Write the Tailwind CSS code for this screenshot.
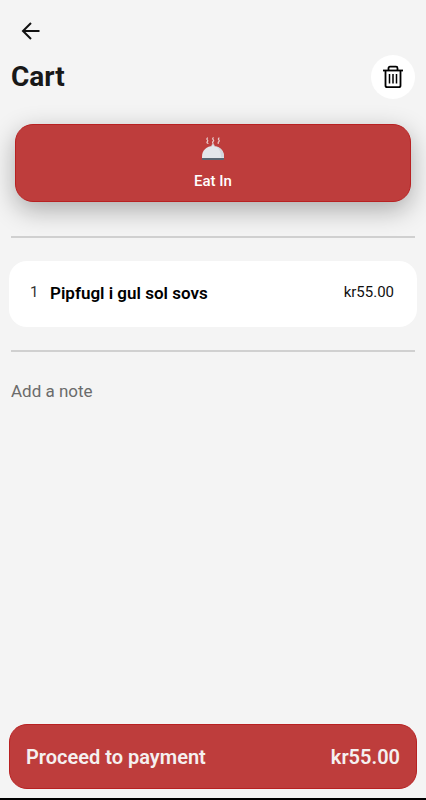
<!DOCTYPE html>
<html lang="en">
<head>
    <meta charset="UTF-8">
    <meta name="viewport" content="width=device-width, initial-scale=1.0">
    <title>Cart</title>
    <script src="https://cdn.jsdelivr.net/npm/@tailwindcss/browser@4"></script>
</head>
<body class="min-h-screen flex flex-col bg-[#f4f4f4] border-b-2 border-black font-['Roboto',sans-serif] text-black overflow-x-hidden">
    <header class="px-[11px] pt-4">
        <button type="button" aria-label="Back" class="flex items-center justify-center w-10 h-[30px]">
            <svg class="w-5 h-5" viewBox="0 0 20 20" fill="none" stroke="#111" stroke-width="2">
                <path d="M18.500 10H2M10 2L2 10l8 8"/>
            </svg>
        </button>
        <div class="flex items-center justify-between mt-[9px]">
            <h1 class="text-[28px] leading-10 font-bold text-[#181818]">Cart</h1>
            <button type="button" aria-label="Empty cart" class="flex items-center justify-center w-11 h-11 rounded-full bg-white">
                <svg class="w-6 h-6" viewBox="0 0 24 24" fill="none" stroke="#000" stroke-width="2">
                    <path d="M2 5.5h20" stroke-width="1.8"/>
                    <path d="M7.5 5V3.2c0-.9.6-1.5 1.5-1.5h6c.9 0 1.5.6 1.5 1.5V5" stroke-width="1.8"/>
                    <path d="M4.5 6v14.5c0 1 .7 1.7 1.7 1.7h11.6c1 0 1.7-.7 1.7-1.7V6" stroke-width="1.8"/>
                    <path d="M8.5 9v9.5M12 9v9.5M15.5 9v9.5" stroke-width="1.5"/>
                </svg>
            </button>
        </div>
    </header>

    <main class="flex flex-col px-[9px]">
        <button type="button" class="flex flex-col items-center mx-1.5 mt-[25px] h-[78px] pt-3 rounded-[18px] bg-[#be3d3c] border border-[#b82122] text-white shadow-[0_8px_26px_rgba(0,0,0,0.3)]">
            <svg class="w-6 h-6" viewBox="0 0 24 24" fill="none">
                <g stroke="#e8c9c9" stroke-width="1.2" stroke-linecap="round">
                    <path d="M6.5 1c-2 1.5 1.5 2.2 0 3.5s.3 1.400.5 2"/>
                    <path d="M12.3.8c-2 1.5 1.5 2.2 0 3.5s-.3 1.4-.3 2.2"/>
                    <path d="M18 1c-2 1.5 1.5 2.2 0 3.5s-.600 1.400-.800 2"/>
                </g>
                <circle cx="12" cy="8.5" r="1.5" fill="#d8dce1"/>
                <path d="M1 21.5v-2C1 13.3 5.6 9 12 9s11 4.3 11 10.5v2z" fill="#e3e6eb"/>
                <path d="M15 9.500c3 1.800 5 5.500 5 11h3v-1c0-5-3-8.800-8-10z" fill="#d3d7de"/>
                <path d="M1 21h22v2H1z" fill="#596673"/>
            </svg>
            <span class="mt-2.5 text-[15px] leading-5 font-medium">Eat In</span>
        </button>

        <hr class="mx-0.5 mt-[34px] border-t-2 border-[#d0d0d0]">

        <div class="flex justify-between mt-[23px] h-[66px] pt-5 pl-[21px] pr-[23px] rounded-[18px] bg-white">
            <div class="flex">
                <span class="w-5 text-[15px] leading-[22px] text-[#333]">1</span>
                <span class="text-[17px] leading-6 font-semibold">Pipfugl i gul sol sovs</span>
            </div>
            <span class="text-[15px] leading-[22px] text-[#111]">kr55.00</span>
        </div>

        <hr class="mx-0.5 mt-[23px] border-t-2 border-[#d0d0d0]">

        <input type="text" aria-label="Add a note" placeholder="Add a note" class="mx-0.5 mt-[19px] h-10 bg-transparent text-[17px] placeholder:text-[#6b6b6b] outline-none">
    </main>

    <footer class="mt-auto px-[9px] pb-[9px]">
        <button type="button" class="flex items-center justify-between w-full h-[65px] px-4 rounded-[18px] bg-[#be3d3c] border border-[#b82122] text-[#f5f0f0] text-xl font-semibold">
            <span>Proceed to payment</span>
            <span>kr55.00</span>
        </button>
    </footer>
</body>
</html>
